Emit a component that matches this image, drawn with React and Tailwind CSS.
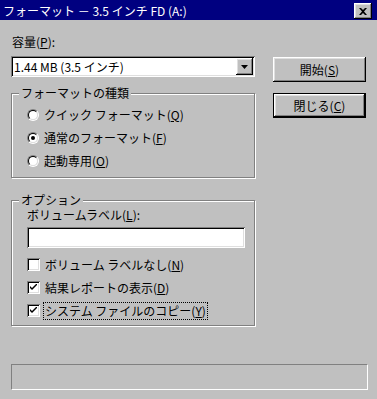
const raised = 'shadow-[inset_-1px_-1px_0_#000,inset_1px_1px_0_#fff,inset_-2px_-2px_0_#808080,inset_2px_2px_0_#dfdfdf]';
const sunken = 'shadow-[inset_1px_1px_0_#808080,inset_-1px_-1px_0_#fff,inset_2px_2px_0_#000,inset_-2px_-2px_0_#dfdfdf]';

const Radio = ({ checked, label, hotkey }) => (
  <div className="h-[23px] flex items-center">
    <div className="w-[12px] h-[12px] rounded-full border border-t-[#808080] border-l-[#808080] border-r-white border-b-white">
      <div className="w-full h-full rounded-full border border-t-black border-l-black border-r-[#dfdfdf] border-b-[#dfdfdf] bg-white flex items-center justify-center">
        {checked && <div className="w-[4px] h-[4px] rounded-full bg-black" />}
      </div>
    </div>
    <span className="ml-[5px] leading-[14px]">
      {label}(<span className="underline">{hotkey}</span>)
    </span>
  </div>
);

const Check = ({ checked, label, hotkey, focused }) => (
  <div className="h-[23px] flex items-center">
    <div className={`w-[13px] h-[13px] bg-white flex items-center justify-center ${sunken}`}>
      {checked && (
        <svg width="7" height="7" viewBox="0 0 7 7">
          <path d="M0 2 L0 4 L2 6 L7 1 L7 -1 L2 4 Z" fill="#000" />
        </svg>
      )}
    </div>
    <span
      className={`leading-[14px] ${
        focused ? 'ml-[3px] px-[1px] py-[1px] border border-dotted border-black' : 'ml-[5px]'
      }`}
    >
      {label}(<span className="underline">{hotkey}</span>)
    </span>
  </div>
);

const Group = ({ title, height, children }) => (
  <div className="relative pt-[7px]">
    <span className="absolute left-[8px] top-0 px-[2px] bg-[#c0c0c0] leading-[14px]">{title}</span>
    <div
      className="w-[244px] border border-[#808080] shadow-[inset_1px_1px_0_#fff,1px_1px_0_#fff] pl-[15px]"
      style={{ height }}
    >
      {children}
    </div>
  </div>
);

const Button = ({ label, hotkey, isDefault }) => (
  <div className={`w-[93px] h-[25px] ${isDefault ? 'border border-black' : ''}`}>
    <div className={`w-full h-full flex items-center justify-center ${raised}`}>
      <span className="leading-[14px]">
        {label}(<span className="underline">{hotkey}</span>)
      </span>
    </div>
  </div>
);

export default function App() {
  return (
    <div className="w-[377px] h-[399px] bg-[#c0c0c0] text-black text-[12px] font-['Noto_Sans_CJK_JP','Noto_Sans',sans-serif] flex flex-col">
      <div className="h-[20px] bg-[#000080] flex items-start pl-[3px] pr-[5px]">
        <span className="flex-1 text-white leading-[14px] mt-[4px]">フォーマット － 3.5 インチ FD (A:)</span>
        <div className={`mt-[3px] w-[18px] h-[16px] bg-[#c0c0c0] flex items-center justify-center ${raised}`}>
          <svg width="8" height="7" viewBox="0 0 8 7">
            <path d="M0 0 L2 0 L4 2 L6 0 L8 0 L5 3.5 L8 7 L6 7 L4 5 L2 7 L0 7 L3 3.5 Z" fill="#000" />
          </svg>
        </div>
      </div>

      <div className="flex pl-[11px] pt-[15px]">
        <div className="w-[245px] flex flex-col">
          <span className="leading-[14px] pl-[1px]">
            容量(<span className="underline">P</span>):
          </span>
          <div className={`mt-[7px] w-[244px] h-[21px] bg-white flex items-center p-[2px] ${sunken}`}>
            <span className="flex-1 pl-[1px] leading-[14px]">1.44 MB (3.5 インチ)</span>
            <div className={`w-[17px] h-[17px] bg-[#c0c0c0] flex items-center justify-center ${raised}`}>
              <svg width="7" height="4" viewBox="0 0 7 4">
                <path d="M0 0 L7 0 L3.5 4 Z" fill="#000" />
              </svg>
            </div>
          </div>

          <div className="mt-[9px]">
            <Group title="フォーマットの種類" height={85}>
              <div className="pt-[9px]">
                <Radio label="クイック フォーマット" hotkey="Q" />
                <Radio checked label="通常のフォーマット" hotkey="F" />
                <Radio label="起動専用" hotkey="O" />
              </div>
            </Group>
          </div>

          <div className="mt-[15px]">
            <Group title="オプション" height={126}>
              <div className="pt-[7px] flex flex-col">
                <span className="leading-[14px]">
                  ボリュームラベル(<span className="underline">L</span>):
                </span>
                <div className={`mt-[5px] w-[218px] h-[21px] bg-white ${sunken}`} />
                <div className="mt-[5px]">
                  <Check label="ボリューム ラベルなし" hotkey="N" />
                  <Check checked label="結果レポートの表示" hotkey="D" />
                  <Check checked focused label="システム ファイルのコピー" hotkey="Y" />
                </div>
              </div>
            </Group>
          </div>
        </div>

        <div className="ml-[17px] mt-[22px] flex flex-col gap-[11px]">
          <Button label="開始" hotkey="S" />
          <Button label="閉じる" hotkey="C" isDefault />
        </div>
      </div>

      <div className="mt-auto mb-[9px] ml-[11px] w-[357px] h-[26px] border border-t-[#808080] border-l-[#808080] border-r-white border-b-white" />
    </div>
  );
}
